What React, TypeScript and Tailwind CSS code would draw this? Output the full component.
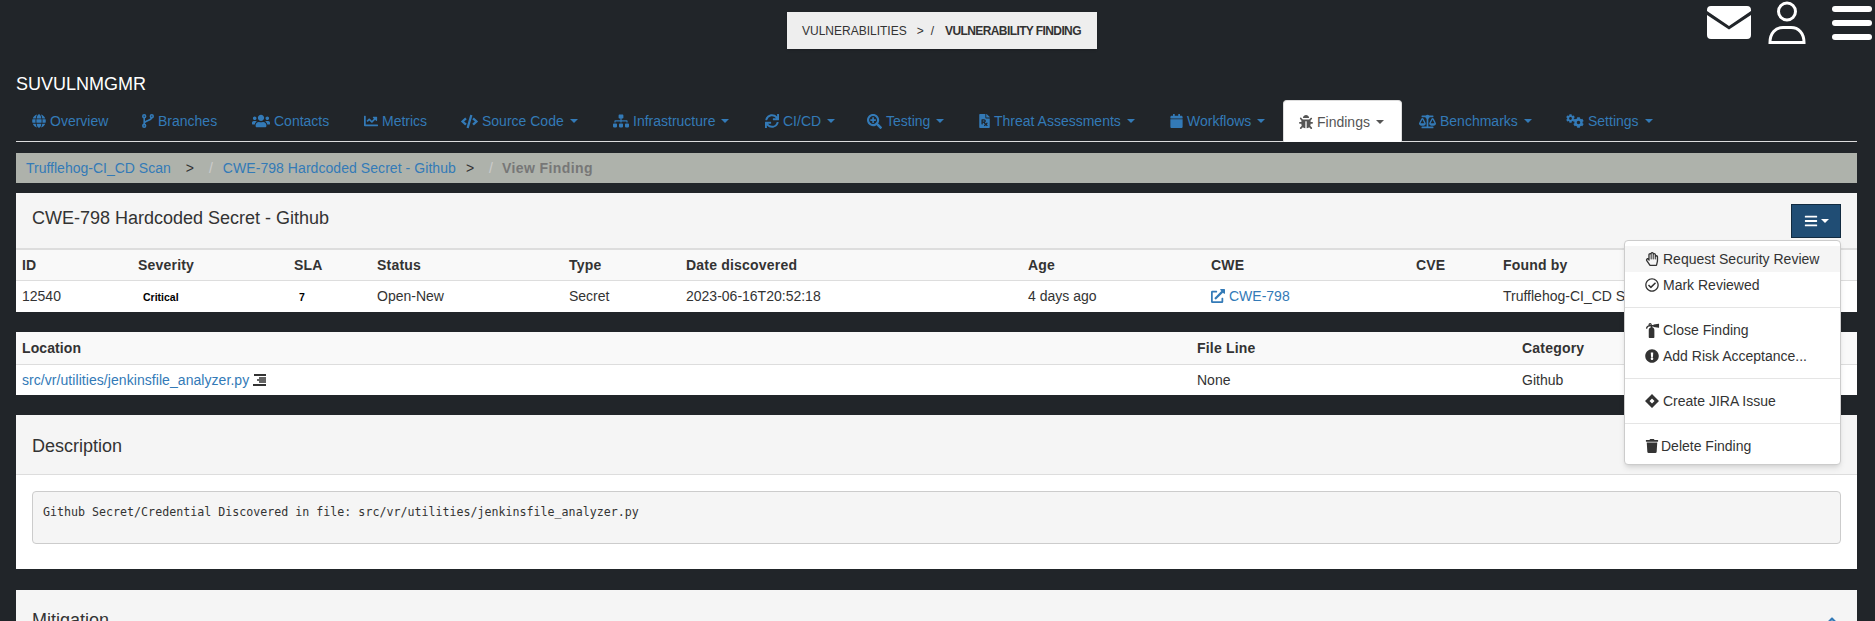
import type { ReactNode } from 'react';
import {
  FaBalanceScale,
  FaBars,
  FaBug,
  FaCalendar,
  FaChartLine,
  FaChevronUp,
  FaCode,
  FaCog,
  FaExclamationCircle,
  FaExternalLinkAlt,
  FaFilePrescription,
  FaFireExtinguisher,
  FaGlobe,
  FaRegCheckCircle,
  FaRegHandPaper,
  FaSearchPlus,
  FaSitemap,
  FaSync,
  FaTrash,
  FaUsers,
} from 'react-icons/fa';

function ForkIcon() {
  return (
    <svg width="12" height="14" viewBox="0 0 12 14" fill="none" stroke="currentColor" strokeWidth="1.6">
      <circle cx="2.2" cy="2.2" r="1.4" />
      <circle cx="9.800" cy="2.2" r="1.4" />
      <circle cx="2.2" cy="11.800" r="1.4" />
      <path d="M2.2 3.600v6.800M9.800 3.600c0 3.400-7.600 2.400-7.600 6" />
    </svg>
  );
}

function CogsIcon() {
  return (
    <span className="flex h-[14px] w-[18px]">
      <FaCog size={9} className="self-start" />
      <FaCog size={11} className="-ml-[2px] self-end" />
    </span>
  );
}

const tabs = [
  { label: 'Overview', icon: <FaGlobe size={14} />, box: 'w-[14px]', width: 'w-[107px]' },
  { label: 'Branches', icon: <ForkIcon />, box: 'w-[13px]', width: 'w-[109px]' },
  { label: 'Contacts', icon: <FaUsers size={18} />, box: 'w-[18px]', width: 'w-[109px]' },
  { label: 'Metrics', icon: <FaChartLine size={14} />, box: 'w-[15px]', width: 'w-[96px]' },
  { label: 'Source Code', icon: <FaCode size={17} />, box: 'w-[17px]', width: 'w-[150px]', caret: true },
  { label: 'Infrastructure', icon: <FaSitemap size={16} />, box: 'w-[16px]', width: 'w-[150px]', caret: true },
  { label: 'CI/CD', icon: <FaSync size={14} />, box: 'w-[14px]', width: 'w-[100px]', caret: true },
  { label: 'Testing', icon: <FaSearchPlus size={15} />, box: 'w-[15px]', width: 'w-[110px]', caret: true },
  { label: 'Threat Assessments', icon: <FaFilePrescription size={14} />, box: 'w-[11px]', width: 'w-[189px]', caret: true },
  { label: 'Workflows', icon: <FaCalendar size={14} />, box: 'w-[13px]', width: 'w-[126px]', caret: true },
  { label: 'Findings', icon: <FaBug size={14} />, box: 'w-[14px]', width: 'w-[119px]', caret: true, active: true },
  { label: 'Benchmarks', icon: <FaBalanceScale size={17} />, box: 'w-[17px]', width: 'w-[145px]', caret: true },
  { label: 'Settings', icon: <CogsIcon />, box: 'w-[18px]', width: 'w-[120px]', caret: true },
];

function Caret() {
  return <span className="ml-[6px] inline-block border-x-[4px] border-t-[4px] border-x-transparent border-t-current align-middle" />;
}

function MenuItem({ icon, box, children, hover }: { icon: ReactNode; box: string; children: ReactNode; hover?: boolean }) {
  return (
    <div className={`flex h-[26px] items-center pl-[20px] text-[#333] ${hover ? 'bg-[#f5f5f5]' : ''}`}>
      <span className={`flex shrink-0 items-center ${box}`}>{icon}</span>
      {children}
    </div>
  );
}

function Divider() {
  return <div className="my-[9px] h-px bg-[#e5e5e5]" />;
}

export default function App() {
  return (
    <div className="relative h-[621px] overflow-hidden bg-[#212529] font-['Liberation_Sans',Arial,sans-serif] text-[14px] leading-[20px] text-[#333]">
      {/* top bar */}
      <div className="relative flex h-[70px] justify-center pl-[9px] pt-[12px]">
        <div className="flex h-[37px] w-[310px] items-center bg-[#eee] pl-[15px] text-[12px] uppercase text-[#333] shadow-sm">
          <span>Vulnerabilities</span>
          <span className="ml-[10px]">&gt;</span>
          <span className="ml-[7px]">/</span>
          <span className="ml-[11px] font-bold tracking-[-0.6px]">Vulnerability Finding</span>
        </div>
        <div className="absolute right-[3px] top-0 flex items-start">
          <svg width="44" height="33" viewBox="0 0 44 33" className="mr-[17px] mt-[6px]" fill="#fff">
            <path d="M4 0h36a4 4 0 0 1 4 4v1L22 20 0 5V4a4 4 0 0 1 4-4zM0 9l22 14.500L44 9v20a4 4 0 0 1-4 4H4a4 4 0 0 1-4-4z" />
          </svg>
          <svg width="38" height="43" viewBox="0 0 38 43" className="mr-[26px] mt-[1px]" fill="none" stroke="#fff" strokeWidth="3">
            <circle cx="19" cy="10.5" r="8.5" />
            <path d="M2 41.500c0-9.500 5.500-15 13-15h8c7.500 0 13 5.500 13 15z" />
          </svg>
          <div className="mt-[6px] flex w-[40px] flex-col gap-[8px]">
            <div className="h-[6px] rounded-full bg-white" />
            <div className="h-[6px] rounded-full bg-white" />
            <div className="h-[6px] rounded-full bg-white" />
          </div>
        </div>
      </div>

      <div className="ml-[16px] mr-[18px]">
        <div className="text-[18px] leading-[28px] text-white">SUVULNMGMR</div>

        {/* nav tabs */}
        <div className="mt-[2px] flex h-[42px] border-b border-[#ddd] pl-px">
          {tabs.map((tab) => (
            <div
              key={tab.label}
              className={`mr-[2px] flex h-[42px] shrink-0 items-center rounded-t-[4px] pl-[15px] ${tab.width} ${tab.active ? 'border-x border-t border-[#ddd] bg-white text-[#555]' : 'text-[#337ab7]'}`}
            >
              <span className={`mr-[4px] flex shrink-0 items-center justify-center ${tab.box}`}>{tab.icon}</span>
              {tab.label}
              {tab.caret && <Caret />}
            </div>
          ))}
        </div>

        {/* breadcrumb */}
        <div className="mt-[11px] flex h-[30px] items-center bg-[#aeb2ab] pl-[10px]">
          <span className="text-[#337ab7]">Trufflehog-CI_CD Scan</span>
          <span className="ml-[15px] text-[#333]">&gt;</span>
          <span className="ml-[15px] text-[#ccc]">/</span>
          <span className="ml-[10px] tracking-[0.06px] text-[#337ab7]">CWE-798 Hardcoded Secret - Github</span>
          <span className="ml-[10px] text-[#333]">&gt;</span>
          <span className="ml-[15px] text-[#ccc]">/</span>
          <span className="ml-[9px] font-bold tracking-[0.4px] text-[#777]">View Finding</span>
        </div>

        {/* finding header */}
        <div className="mt-[10px] bg-white">
          <div className="flex h-[55px] items-center justify-between bg-[#f5f5f5] px-[16px]">
            <h3 className="-mt-[6px] text-[18px] leading-[20px] text-[#333]">CWE-798 Hardcoded Secret - Github</h3>
            <button className="mt-[1px] flex h-[34px] w-[50px] items-center justify-center gap-[3px] border border-[#122b40] bg-[#204d74] text-white">
              <FaBars size={14} />
              <span className="inline-block border-x-[4px] border-t-[4px] border-x-transparent border-t-white" />
            </button>
          </div>
          <table className="w-full table-fixed border-t-2 border-[#ddd]">
            <colgroup>
              <col className="w-[116px]" />
              <col className="w-[156px]" />
              <col className="w-[83px]" />
              <col className="w-[192px]" />
              <col className="w-[117px]" />
              <col className="w-[342px]" />
              <col className="w-[183px]" />
              <col className="w-[205px]" />
              <col className="w-[87px]" />
              <col />
            </colgroup>
            <thead>
              <tr className="h-[31px] border-b border-[#ddd] bg-[#f9f9f9] text-left">
                {['ID', 'Severity', 'SLA', 'Status', 'Type', 'Date discovered', 'Age', 'CWE', 'CVE', 'Found by'].map((h) => (
                  <th key={h} className="px-[6px] font-bold tracking-[0.2px]">{h}</th>
                ))}
              </tr>
            </thead>
            <tbody>
              <tr className="h-[32px]">
                <td className="px-[6px]">12540</td>
                <td className="px-[6px]"><span className="px-[5px] text-[10.5px] font-bold text-black">Critical</span></td>
                <td className="px-[6px]"><span className="px-[5px] text-[10.5px] font-bold text-black">7</span></td>
                <td className="px-[6px]">Open-New</td>
                <td className="px-[6px]">Secret</td>
                <td className="px-[6px]">2023-06-16T20:52:18</td>
                <td className="px-[6px]">4 days ago</td>
                <td className="px-[6px] text-[#337ab7]">
                  <span className="flex items-center gap-[4px]"><FaExternalLinkAlt size={14} />CWE-798</span>
                </td>
                <td className="px-[6px]" />
                <td className="whitespace-nowrap px-[6px]">Trufflehog-CI_CD Scan</td>
              </tr>
            </tbody>
          </table>
        </div>

        {/* location */}
        <table className="mt-[20px] w-full table-fixed bg-white">
          <colgroup>
            <col className="w-[1175px]" />
            <col className="w-[325px]" />
            <col />
          </colgroup>
          <thead>
            <tr className="h-[32px] border-b border-[#ddd] bg-[#f9f9f9] text-left">
              <th className="px-[6px] font-bold tracking-[0.1px]">Location</th>
              <th className="px-[6px] font-bold tracking-[0.2px]">File Line</th>
              <th className="px-[6px] font-bold tracking-[0.2px]">Category</th>
            </tr>
          </thead>
          <tbody>
            <tr className="h-[31px]">
              <td className="px-[6px]">
                <span className="flex items-center gap-[4px]">
                  <span className="tracking-[0.06px] text-[#337ab7]">src/vr/utilities/jenkinsfile_analyzer.py</span>
                  <svg width="13" height="12" viewBox="0 0 13 12" fill="#333">
                    <path d="M1 0h12v2H1zM6 3.300h7v1.400H6zM4 5.300h9v1.400H4zM6 7.300h7v1.400H6zM0 10h13v2H0z" />
                  </svg>
                </span>
              </td>
              <td className="px-[6px]">None</td>
              <td className="px-[6px]">Github</td>
            </tr>
          </tbody>
        </table>

        {/* description */}
        <div className="mt-[20px] bg-white">
          <div className="flex h-[60px] items-center border-b border-[#ddd] bg-[#f5f5f5] pl-[16px] pt-[2px] text-[18px] text-[#333]">Description</div>
          <div className="px-[16px] pb-[25px] pt-[16px]">
            <pre className="h-[53px] rounded-[4px] border border-[#ccc] bg-[#f5f5f5] px-[10px] pt-[11px] font-['DejaVu_Sans_Mono',monospace] text-[11.65px] leading-[18px] text-[#333]">Github Secret/Credential Discovered in file: src/vr/utilities/jenkinsfile_analyzer.py</pre>
          </div>
        </div>

        {/* mitigation */}
        <div className="mt-[21px] h-[60px] bg-[#f5f5f5] pl-[16px] pr-[18px] pt-[20px]">
          <div className="flex items-start justify-between text-[18px] text-[#333]">
            <span>Mitigation</span>
            <span className="mt-[4px] text-[#337ab7]"><FaChevronUp size={14} /></span>
          </div>
        </div>
      </div>

      {/* open actions menu */}
      <div className="absolute left-[1624px] top-[240px] w-[217px] rounded-[4px] border border-[#ccc] bg-white py-[5px] shadow-md">
        <MenuItem hover box="w-[18px]" icon={<FaRegHandPaper size={14} />}>Request Security Review</MenuItem>
        <MenuItem box="w-[18px]" icon={<FaRegCheckCircle size={14} />}>Mark Reviewed</MenuItem>
        <Divider />
        <MenuItem box="w-[18px]" icon={<FaFireExtinguisher size={15} />}>Close Finding</MenuItem>
        <MenuItem box="w-[18px]" icon={<FaExclamationCircle size={14} />}>Add Risk Acceptance...</MenuItem>
        <Divider />
        <MenuItem
          box="w-[18px]"
          icon={
            <svg width="14" height="14" viewBox="0 0 14 14" fill="#333">
              <path fillRule="evenodd" d="M7 0l7 7-7 7-7-7zM7 4.500L4.500 7 7 9.500 9.500 7z" />
            </svg>
          }
        >
          Create JIRA Issue
        </MenuItem>
        <Divider />
        <MenuItem box="w-[16px]" icon={<FaTrash size={14} />}>Delete Finding</MenuItem>
      </div>
    </div>
  );
}
